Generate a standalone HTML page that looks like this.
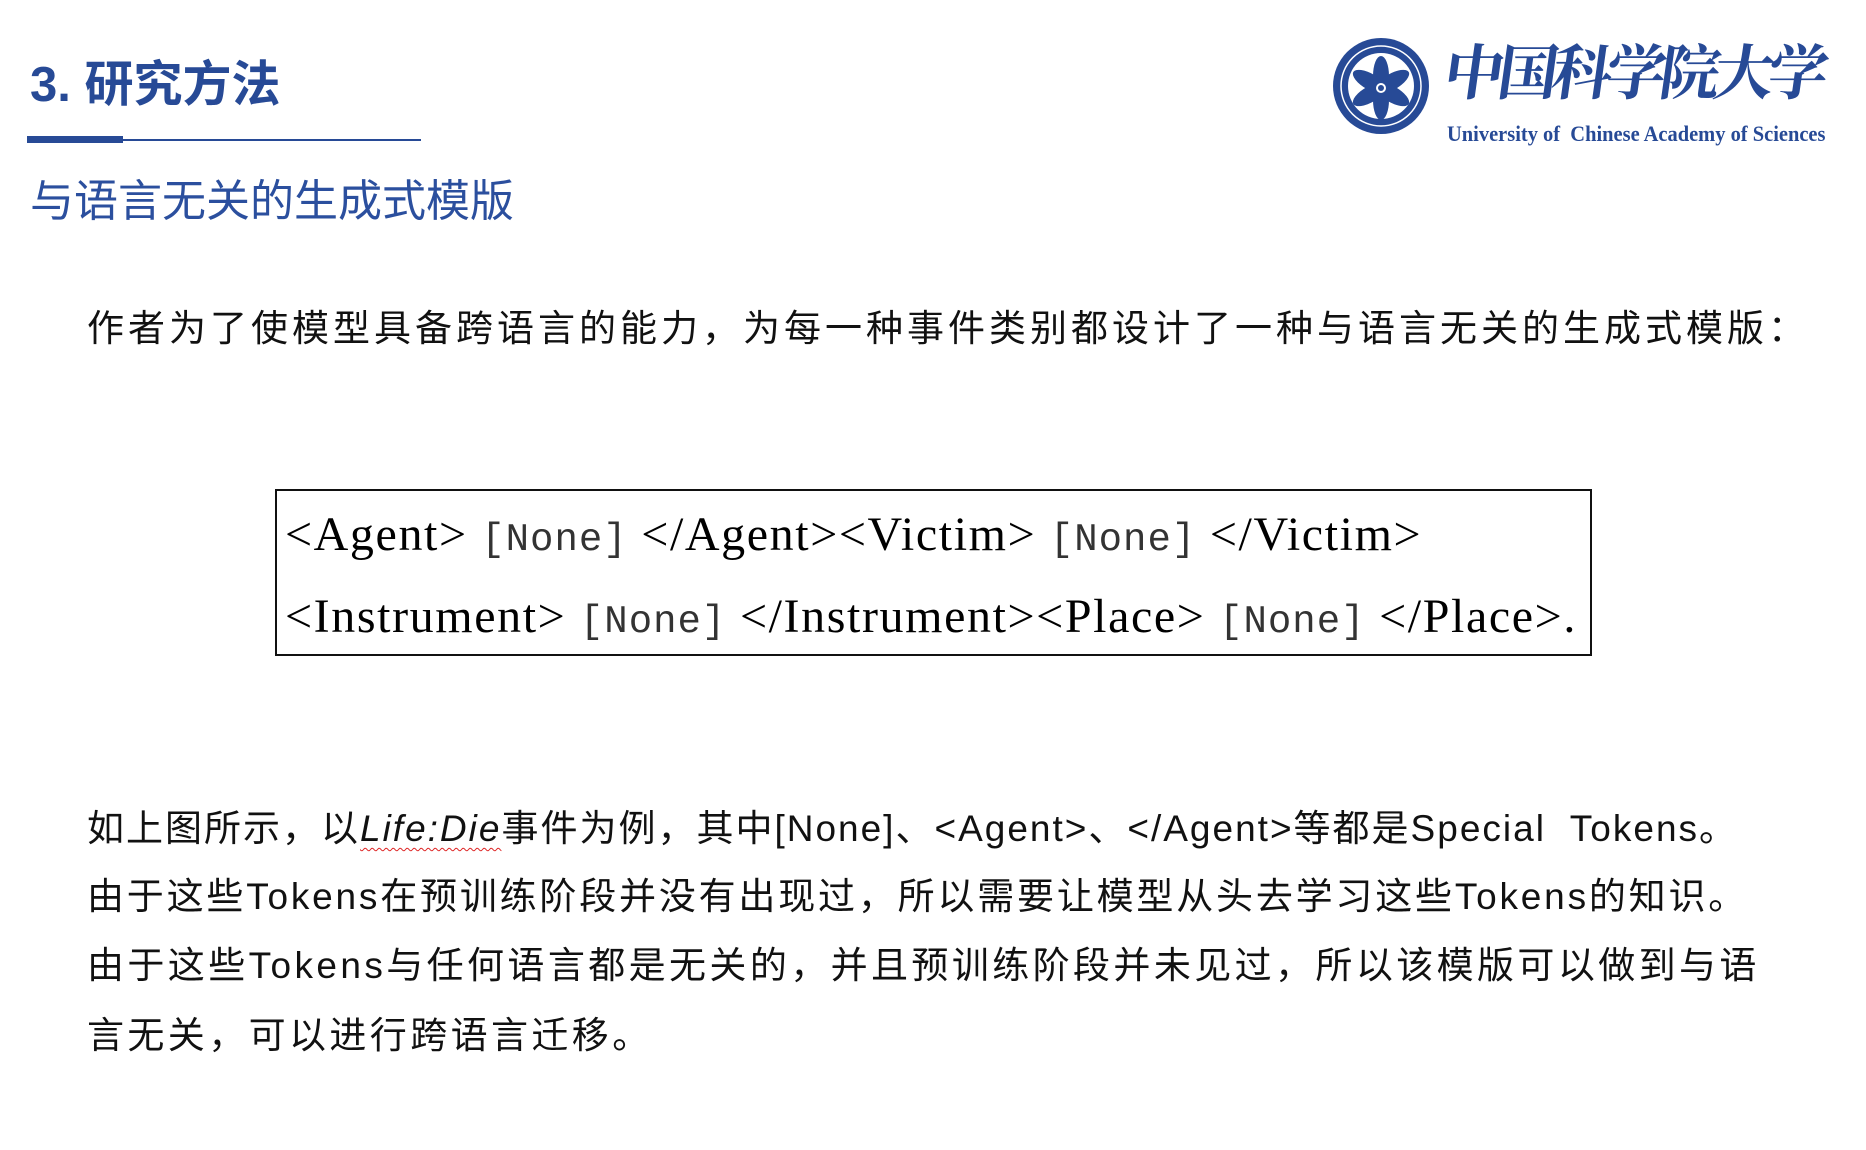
<!DOCTYPE html>
<html><head><meta charset="utf-8"><style>
body{margin:0;width:1866px;height:1150px;background:#fff;position:relative;overflow:hidden;font-family:"Liberation Sans","Noto Sans CJK SC",sans-serif}
.a{position:absolute;white-space:nowrap}
.blue{color:#274a96}
.p{font-size:37px;color:#111;letter-spacing:4px}
.box{position:absolute;left:275px;top:489px;width:1313px;height:163px;border:2px solid #111}
.tl{position:absolute;left:8px;font-family:"Liberation Serif",serif;font-size:48px;color:#000;white-space:nowrap;letter-spacing:1.6px}
.nm{font-family:"Liberation Mono",monospace;font-size:39px;color:#333;letter-spacing:1px}
</style></head><body>
<div class="a blue" style="left:30px;top:45px;font-size:49px;font-weight:bold">3. 研究方法</div>
<div class="a" style="left:27px;top:136px;width:96px;height:7px;background:#274a96"></div>
<div class="a" style="left:123px;top:139px;width:298px;height:2px;background:#274a96"></div>
<div class="a blue" style="left:30px;top:165px;font-size:44px;color:#2b4f9e">与语言无关的生成式模版</div>

<svg class="a" style="left:1332px;top:37px" width="98" height="98" viewBox="0 0 98 98">
<circle cx="49" cy="49" r="48" fill="#274a96"/>
<circle cx="49" cy="49" r="40" fill="none" stroke="#fff" stroke-width="1.5"/>
<circle cx="49" cy="49" r="33" fill="#fff"/>
<g fill="#274a96" transform="translate(49,51)">
<ellipse rx="8" ry="20" transform="rotate(0) translate(0,-12)"/>
<ellipse rx="8" ry="20" transform="rotate(60) translate(0,-12)"/>
<ellipse rx="8" ry="20" transform="rotate(120) translate(0,-12)"/>
<ellipse rx="8" ry="20" transform="rotate(180) translate(0,-12)"/>
<ellipse rx="8" ry="20" transform="rotate(240) translate(0,-12)"/>
<ellipse rx="8" ry="20" transform="rotate(300) translate(0,-12)"/>
<circle r="5" fill="#fff"/><circle r="3"/>
</g>
</svg>
<div class="a blue" style="left:1445px;top:26px;font-size:60px;font-family:'Noto Serif CJK SC',serif;font-weight:bold;letter-spacing:-6px;transform:skewX(-8deg)">中国科学院大学</div>
<div class="a blue" style="left:1447px;top:121px;font-size:22px;font-family:'Liberation Serif',serif;font-weight:bold;transform:scaleX(0.93);transform-origin:left top">University of&nbsp; Chinese Academy of Sciences</div>

<div class="a p" style="left:87px;top:298px">作者为了使模型具备跨语言的能力，为每一种事件类别都设计了一种与语言无关的生成式模版：</div>

<div class="box">
<div class="tl" style="top:16px">&lt;Agent&gt; <span class="nm">[None]</span> &lt;/Agent&gt;&lt;Victim&gt; <span class="nm">[None]</span> &lt;/Victim&gt;</div>
<div class="tl" style="top:98px">&lt;Instrument&gt; <span class="nm">[None]</span> &lt;/Instrument&gt;&lt;Place&gt; <span class="nm">[None]</span> &lt;/Place&gt;.</div>
</div>

<div class="a p" style="left:87px;top:798px;letter-spacing:2px">如上图所示，以<i style="text-decoration:underline wavy #d22;text-decoration-thickness:1px;text-underline-offset:6px">Life:Die</i>事件为例，其中[None]、&lt;Agent&gt;、&lt;/Agent&gt;等都是Special&nbsp; Tokens。</div>
<div class="a p" style="left:87px;top:866px;letter-spacing:2.8px">由于这些Tokens在预训练阶段并没有出现过，所以需要让模型从头去学习这些Tokens的知识。</div>
<div class="a p" style="left:87px;top:935px;letter-spacing:3.4px">由于这些Tokens与任何语言都是无关的，并且预训练阶段并未见过，所以该模版可以做到与语</div>
<div class="a p" style="left:87px;top:1005px;letter-spacing:3.4px">言无关，可以进行跨语言迁移。</div>
</body></html>
